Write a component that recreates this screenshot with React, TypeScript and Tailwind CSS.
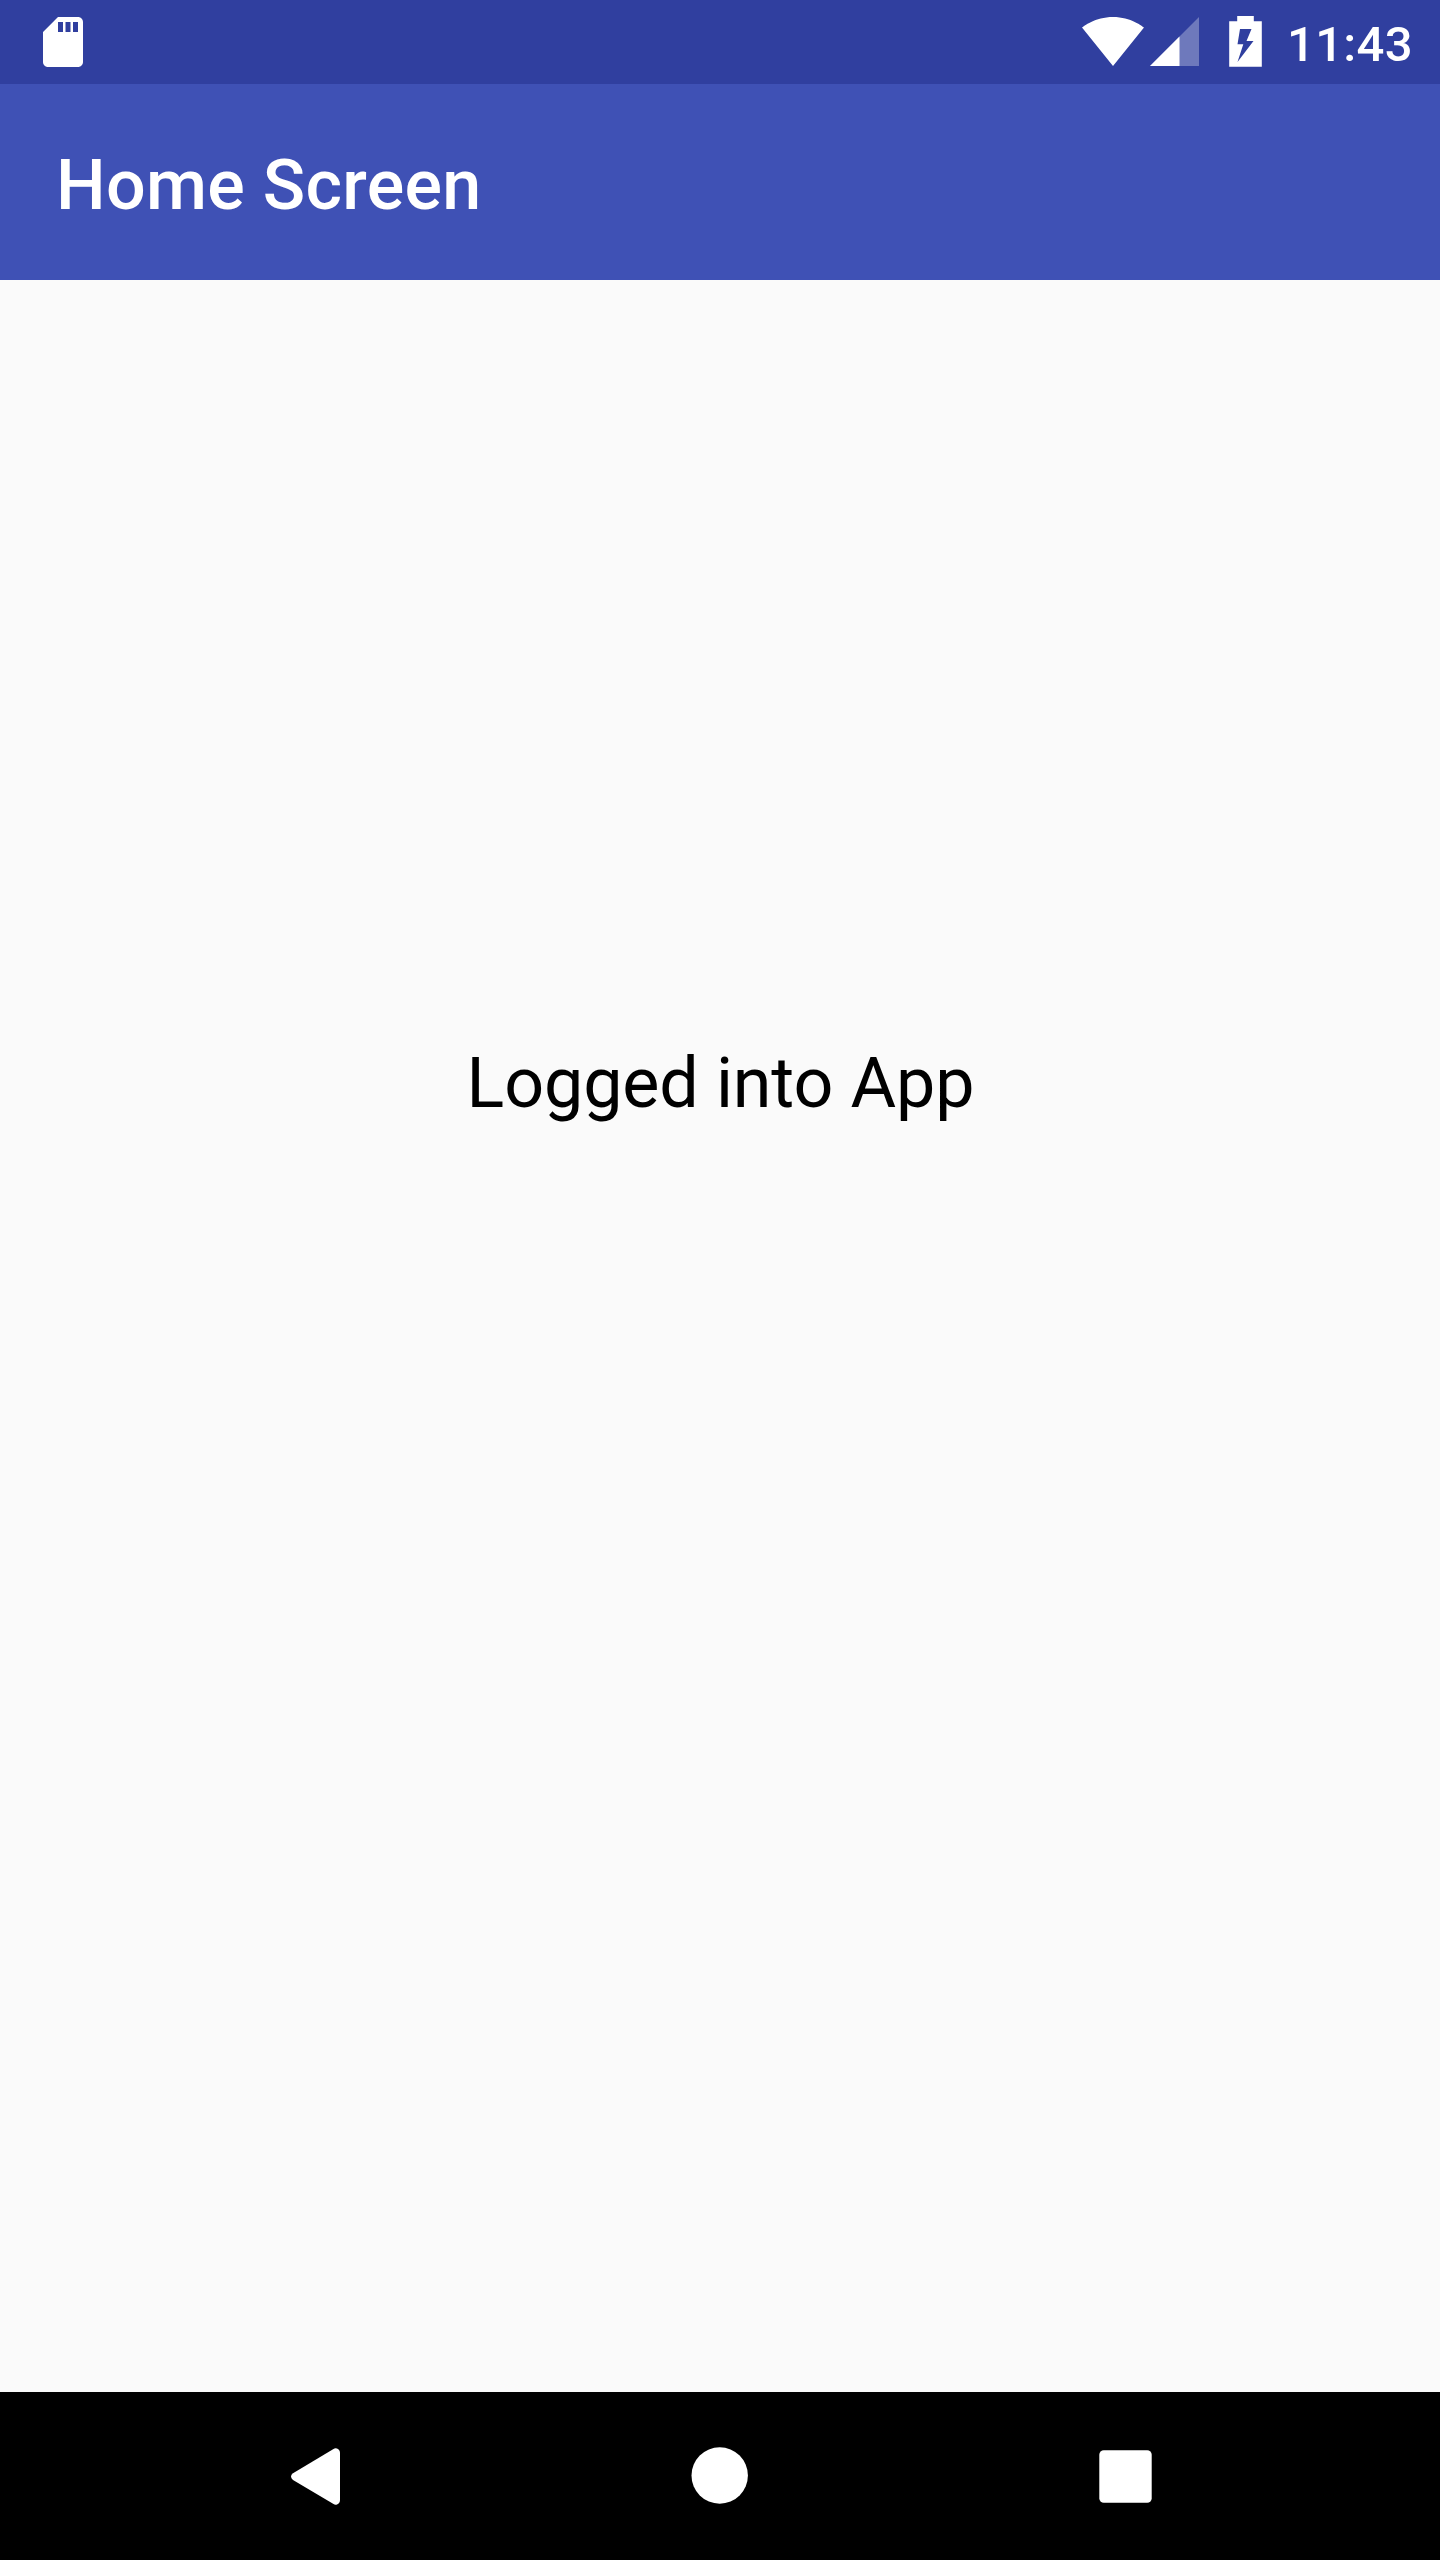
function StatusBar() {
  return (
    <header className="flex h-[84px] items-start justify-between bg-[#303f9f] text-white">
      <svg className="mt-3 ml-[33px] size-[60px]" viewBox="0 0 24 24" fill="currentColor" aria-label="SD card">
        <path d="M18 2h-8L4 8v12c0 1.1.9 2 2 2h12c1.1 0 2-.9 2-2V4c0-1.1-.9-2-2-2zm-6 6h-2V4h2v4zm3 0h-2V4h2v4zm3 0h-2V4h2v4z" />
      </svg>
      <div className="flex w-[358px] items-start">
        <svg className="mt-[17px] h-[49px] w-[62px]" viewBox="0 0 62 49" fill="currentColor" aria-label="Wi-Fi">
          <path d="M31 49L0 10.600C1.200 9.700 13 0 31 0s29.800 9.700 31 10.600z" />
        </svg>
        <svg className="mt-[17px] ml-[6px] h-[49px] w-[49px]" viewBox="0 0 49 49" fill="currentColor" aria-label="Signal">
          <path fillOpacity="0.3" d="M0 49H49V0z" />
          <path d="M0 49H29.500V19.500z" />
        </svg>
        <svg className="mt-[16px] ml-[30px] h-[51px] w-[33px]" viewBox="0 0 33 51" fill="currentColor" aria-label="Battery charging">
          <path fillRule="evenodd" d="M8.200 0H24.800V5.200H32.800V50.800H.2V5.200H8.200zM11 13L8.500 28.300H14.300L8.500 46L24.500 25H17.500L22.500 13z" />
        </svg>
        <span className="mt-[16px] ml-[25px] text-[49px] leading-[57px] font-medium tracking-[0.3px]">11:43</span>
      </div>
    </header>
  );
}

function NavigationBar() {
  return (
    <nav className="flex h-[168px] items-start bg-black text-white">
      <svg className="mt-[56px] ml-[291px] h-[57px] w-[49px]" viewBox="0 0 49 57" fill="currentColor" aria-label="Back">
        <path d="M2 25.300L42.500.9Q44.200 0 46 .6Q49 1.800 49 5V52Q49 55.200 46 56.400Q44.200 57 42.500 56.100L2 32Q0 30.600 0 28.600T2 25.300z" />
      </svg>
      <svg className="mt-[55px] ml-[351px] size-[57px]" viewBox="0 0 57 57" fill="currentColor" aria-label="Home">
        <circle cx="28.700" cy="28.500" r="28.200" />
      </svg>
      <svg className="mt-[58px] ml-[351px] size-[53px]" viewBox="0 0 53 53" fill="currentColor" aria-label="Recent apps">
        <rect x="0.300" y="0.200" width="52.400" height="52.500" rx="4.500" />
      </svg>
    </nav>
  );
}

export default function App() {
  return (
    <div className="flex h-[2560px] w-[1440px] flex-col bg-[#fafafa] font-['Roboto',sans-serif]">
      <StatusBar />
      <div className="flex h-[196px] items-center bg-[#3f51b5] px-14 pt-[6px]">
        <h1 className="text-[70px] leading-[82px] font-medium tracking-[0.3px] text-white">Home Screen</h1>
      </div>
      <main className="flex flex-1 justify-center pt-[762px]">
        <p className="pl-px text-[70px] leading-[82px] tracking-[-0.12px] text-black">Logged into App</p>
      </main>
      <NavigationBar />
    </div>
  );
}
